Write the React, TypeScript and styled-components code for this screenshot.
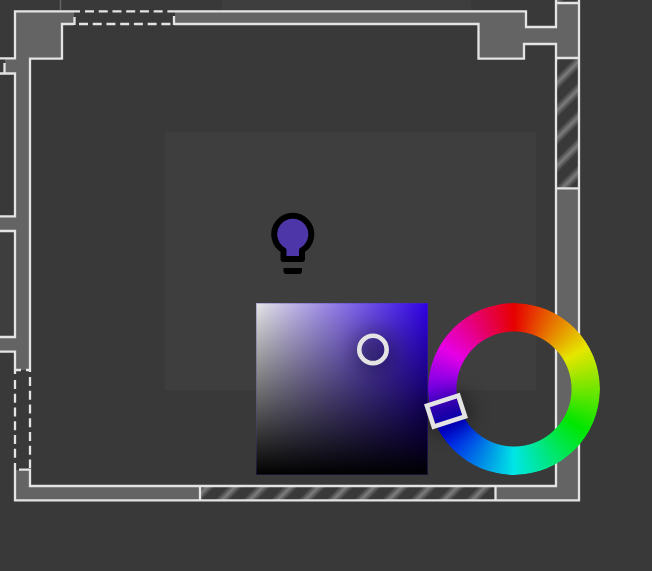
import React, { useState } from "react";
import styled, { createGlobalStyle } from "styled-components";

const GlobalStyle = createGlobalStyle`
  body {
    margin: 0;
    background: #393939;
    font-family: "Liberation Sans", sans-serif;
  }
`;

const Stage = styled.main`
  position: relative;
  min-height: 100vh;
  overflow: hidden;
  background: #393939;
`;

const Plan = styled.svg`
  display: block;
`;

const LightButton = styled.button`
  position: absolute;
  left: 268px;
  top: 208px;
  padding: 0;
  border: 0;
  background: none;
  cursor: pointer;

  svg {
    display: block;
  }
`;

const Picker = styled.section`
  position: absolute;
  left: 256px;
  top: 303px;
  display: flex;
`;

const Shade = styled.div`
  position: relative;
  width: 172px;
  height: 172px;
  background-image:
    linear-gradient(to top, #000, transparent),
    linear-gradient(to right, #e6e6e6, transparent);
  box-shadow: inset 0 0 0 1px rgba(81, 56, 166, 0.3);
`;

const Wheel = styled.div`
  position: relative;
  width: 172px;
  height: 172px;

  &::before {
    content: "";
    position: absolute;
    inset: 0;
    border-radius: 50%;
    background: conic-gradient(#e60000, #e6e600, #00e600, #00e6e6, #0000e6, #e600e6, #e60000);
    mask: radial-gradient(circle, transparent 57px, #000 58px);
  }
`;

const Handles = styled.svg`
  position: absolute;
  inset: 0;
  overflow: visible;
  pointer-events: none;
  filter: drop-shadow(2px 2px 10px #000);
`;

const Range = styled.input<{ $vertical?: boolean }>`
  position: absolute;
  inset: 0;
  width: 100%;
  height: 100%;
  margin: 0;
  opacity: 0;
  cursor: pointer;
  writing-mode: ${(p) => (p.$vertical ? "vertical-lr" : "horizontal-tb")};
  pointer-events: ${(p) => (p.$vertical ? "none" : "auto")};
`;

const LEVEL = 230;

function toRgb(h: number, s: number, v: number) {
  const channel = (n: number) => {
    const k = (n + h / 60) % 6;
    return Math.round(LEVEL * (v - v * s * Math.max(0, Math.min(k, 4 - k, 1))));
  };
  return `rgb(${channel(5)}, ${channel(3)}, ${channel(1)})`;
}

function FloorPlan() {
  return (
    <Plan width="652" height="571" viewBox="0 0 652 571" role="img" aria-label="Floor plan">
      <defs>
        <linearGradient id="paneSide" gradientUnits="userSpaceOnUse" spreadMethod="repeat" x1="567" y1="73" x2="580.8" y2="86.8">
          <stop offset="0" stopColor="#7c7c7c" />
          <stop offset="0.28" stopColor="#393939" />
          <stop offset="0.72" stopColor="#393939" />
          <stop offset="1" stopColor="#7c7c7c" />
        </linearGradient>
        <linearGradient id="paneBottom" gradientUnits="userSpaceOnUse" spreadMethod="repeat" x1="228.5" y1="493.5" x2="242.4" y2="507.4">
          <stop offset="0" stopColor="#7c7c7c" />
          <stop offset="0.28" stopColor="#393939" />
          <stop offset="0.72" stopColor="#393939" />
          <stop offset="1" stopColor="#7c7c7c" />
        </linearGradient>
      </defs>

      <g fill="#3e3e3e">
        <path d="M165 132H536V390H165Z" />
        <path d="M222 0H471V11H222Z" />
        <path d="M0 231H15V337H0Z" />
      </g>
      <path d="M60.5 0V10" stroke="#666" strokeWidth="1.5" />

      <g fill="#646464">
        <path d="M15 11H74V24H62V58.4H30V370H15V351.5H0V337H15V231H0V216.5H15V73.5H5V58.4H15Z" />
        <path d="M175 11H526V27H556V3H579V58H556V44H524V58.4H478.5V24H175Z" />
        <path d="M15 470H30V486H200V500.4H15Z" />
        <path d="M556 188.4H579V500.4H496V486H556Z" />
      </g>
      <path d="M556 58H579V188H556ZM556 0H579V3H556Z" fill="url(#paneSide)" />
      <path d="M200 486H496V500H200Z" fill="url(#paneBottom)" />

      <g fill="none" stroke="#e4e4e4" strokeWidth="2.3">
        <path d="M80 11.4H15V58.4H0M0 73.5H15V216.4H0M0 231H15V337H0M0 351.6H15V374" />
        <path d="M74 24H62V58.6H30V372M74.5 17V25" />
        <path d="M168 11.4H526V27H556V0M174 16V25M174 24H478.5V58.6H524V44H556V486H30V469" />
        <path d="M15 463V500.4H579V0M556 3H579M556 58H579M556 188.4H579" />
        <path d="M200 486V500M495.5 486V500M4.5 63V73" />
        <path d="M16 370H21M26 370H31M19 469.6H29" />
        <path d="M85 11.4H168M79 24H172" strokeDasharray="9 4.73" />
        <path d="M15 380V462M30 377V469" strokeDasharray="9 4.73" />
      </g>
    </Plan>
  );
}

function Bulb({ color }: { color: string }) {
  return (
    <svg width="50" height="70" viewBox="268 208 50 70" aria-hidden="true">
      <path
        d="M283.5 259V250.3A18.5 18.5 0 1 1 302 250.3V259Z"
        fill={color}
        stroke="#000"
        strokeWidth="6"
        strokeLinejoin="round"
      />
      <path d="M283.5 268H302V271Q302 274 299 274H286.5Q283.5 274 283.5 271Z" />
    </svg>
  );
}

export default function App() {
  const [lit, setLit] = useState(true);
  const [hue, setHue] = useState(252);
  const [saturation, setSaturation] = useState(68);
  const [value, setValue] = useState(73);
  const color = toRgb(hue, saturation / 100, value / 100);

  return (
    <>
      <GlobalStyle />
      <Stage>
        <FloorPlan />
        <LightButton aria-label="Light" aria-pressed={lit} onClick={() => setLit(!lit)}>
          <Bulb color={lit ? color : "#646464"} />
        </LightButton>
        <Picker aria-label="Light color">
          <Shade style={{ backgroundColor: toRgb(hue, 1, 1) }}>
            <Range
              type="range"
              min="0"
              max="100"
              value={saturation}
              aria-label="Saturation"
              onChange={(e) => setSaturation(Number(e.target.value))}
            />
            <Range
              $vertical
              type="range"
              min="0"
              max="100"
              value={value}
              aria-label="Brightness"
              onChange={(e) => setValue(Number(e.target.value))}
            />
            <Handles width="172" height="172" viewBox="0 0 172 172" aria-hidden="true">
              <circle
                cx={saturation * 1.72}
                cy={(100 - value) * 1.72}
                r="13.7"
                fill="none"
                stroke="#e4e4e4"
                strokeWidth="4.6"
              />
            </Handles>
          </Shade>
          <Wheel>
            <Range
              type="range"
              min="0"
              max="359"
              value={hue}
              aria-label="Hue"
              onChange={(e) => setHue(Number(e.target.value))}
            />
            <Handles width="172" height="172" viewBox="0 0 172 172" aria-hidden="true">
              <rect
                x="-11"
                y="-16.5"
                width="22"
                height="33"
                transform={`translate(86 86) rotate(${hue}) translate(0 -71.5)`}
                fill="none"
                stroke="#e4e4e4"
                strokeWidth="4.6"
              />
            </Handles>
          </Wheel>
        </Picker>
      </Stage>
    </>
  );
}
